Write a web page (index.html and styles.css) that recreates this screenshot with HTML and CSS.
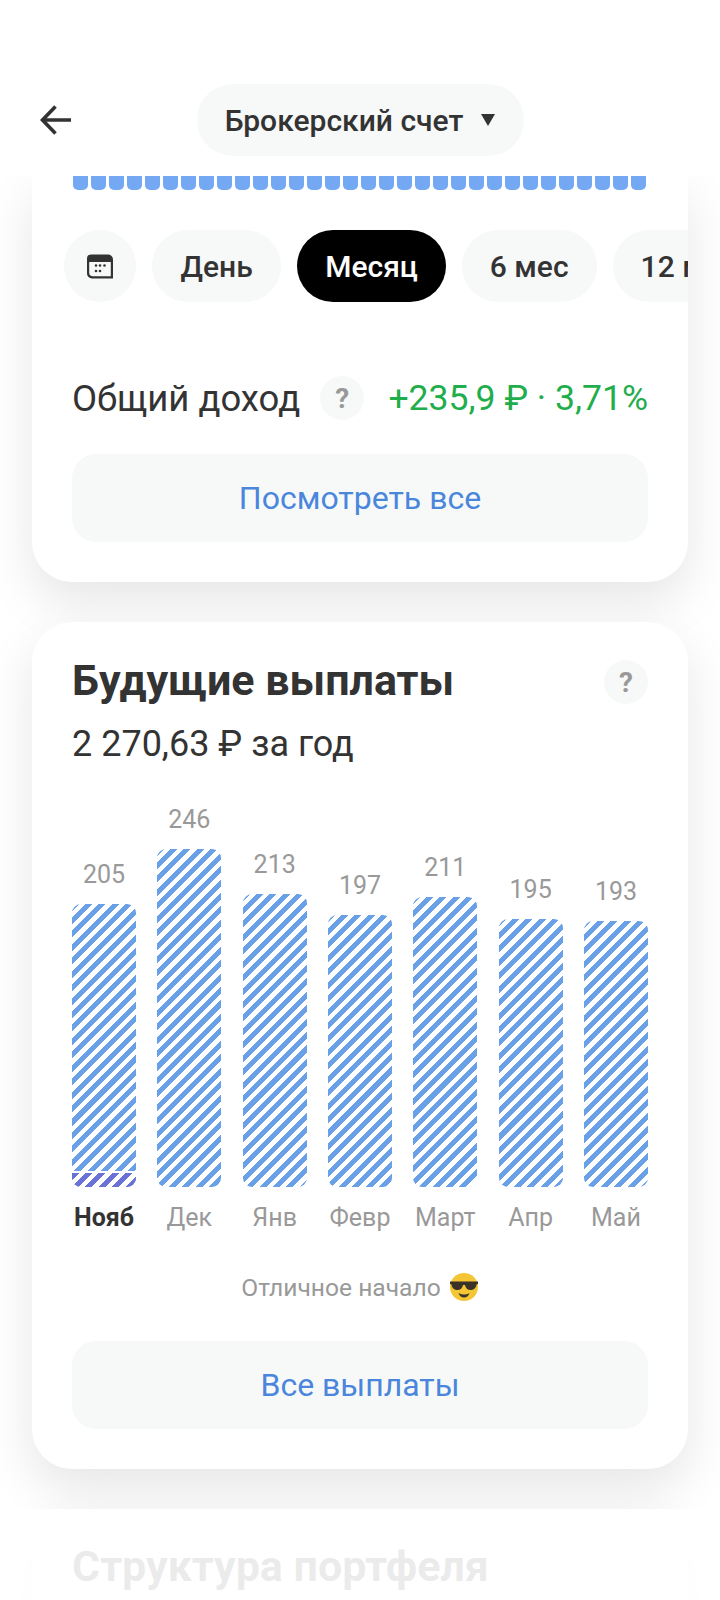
FILE: index.html
```html
<!DOCTYPE html>
<html lang="ru">
<head>
  <meta charset="UTF-8">
  <title>Брокерский счет</title>
  <link rel="stylesheet" href="styles.css">
</head>
<body>

<header class="topbar">
  <svg class="back" width="32" height="30" viewBox="0 0 32 30">
    <path d="M31 15H3M15.5 1.5L2.5 15l13 13.5" fill="none" stroke="#333" stroke-width="3.6"/>
  </svg>
  <div class="account">
    <span>Брокерский счет</span>
    <i class="caret"></i>
  </div>
</header>

<main class="content">

  <section class="card card-first">
    <div class="ticks">
      <i></i><i></i><i></i><i></i><i></i><i></i><i></i><i></i>
      <i></i><i></i><i></i><i></i><i></i><i></i><i></i><i></i>
      <i></i><i></i><i></i><i></i><i></i><i></i><i></i><i></i>
      <i></i><i></i><i></i><i></i><i></i><i></i><i></i><i></i>
    </div>
    <div class="periods">
      <div class="chip chip-icon">
        <svg width="26" height="26" viewBox="0 0 26 26">
          <path d="M4 1.500h17a5 5 0 0 1 5 5v19H5a5 5 0 0 1-5-5v-15a4 4 0 0 1 4-4z" fill="#333"/>
          <path d="M2.200 9h21.600v14.300H6a3.800 3.800 0 0 1-3.800-3.800z" fill="#f7f8f8"/>
          <g fill="#333">
            <circle cx="9" cy="12.500" r="1.300"/><circle cx="13" cy="12.500" r="1.300"/><circle cx="17.500" cy="12.500" r="1.300"/>
            <circle cx="9" cy="18" r="1.300"/><circle cx="13" cy="18" r="1.300"/>
          </g>
        </svg>
      </div>
      <div class="chip chip-day">День</div>
      <div class="chip chip-active">Месяц</div>
      <div class="chip">6 мес</div>
      <div class="chip">12 мес</div>
    </div>
    <div class="income">
      <span class="income-label">Общий доход</span>
      <span class="help">?</span>
      <span class="income-value">+235,9 ₽ · 3,71%</span>
    </div>
    <button class="wide-btn">Посмотреть все</button>
  </section>

  <section class="card card-payments">
    <div class="card-head">
      <h2>Будущие выплаты</h2>
      <span class="help">?</span>
    </div>
    <p class="sum">2 270,63 ₽ за год</p>

    <div class="chart">
      <div class="col"><span class="val">205</span><div class="bar" style="height:283px"><div class="bar-now"></div></div><span class="month month-now">Нояб</span></div>
      <div class="col"><span class="val">246</span><div class="bar" style="height:338px"></div><span class="month">Дек</span></div>
      <div class="col"><span class="val">213</span><div class="bar" style="height:293px"></div><span class="month">Янв</span></div>
      <div class="col"><span class="val">197</span><div class="bar" style="height:272px"></div><span class="month">Февр</span></div>
      <div class="col"><span class="val">211</span><div class="bar" style="height:290px"></div><span class="month">Март</span></div>
      <div class="col"><span class="val">195</span><div class="bar" style="height:268px"></div><span class="month">Апр</span></div>
      <div class="col"><span class="val">193</span><div class="bar" style="height:266px"></div><span class="month">Май</span></div>
    </div>

    <p class="note">
      Отличное начало
      <svg width="30" height="30" viewBox="0 0 30 30">
        <circle cx="15" cy="15" r="14" fill="#f4c534"/>
        <path d="M1 9.500h28v2.500l-1.500.5c-.5 4-3 5.500-6 5.500s-5-2-5.500-5h-2c-.5 3-2.500 5-5.500 5s-5.500-1.500-6-5.500L1 12z" fill="#3a3226"/>
        <path d="M9.500 21c3.500 2 7.500 2 11 0-1 3-3 4.500-5.500 4.500S10.500 24 9.500 21z" fill="#3a3226"/>
      </svg>
    </p>

    <button class="wide-btn">Все выплаты</button>
  </section>

  <section class="card card-next">
    <h2>Структура портфеля</h2>
  </section>

  <div class="fade"></div>
</main>

</body>
</html>
```

FILE: styles.css
```css
* {
  box-sizing: border-box;
}

body {
  margin: 0;
  height: 1600px;
  overflow: hidden;
  background: #fff;
  font-family: Roboto, "Noto Sans", sans-serif;
  color: #333;
}

.topbar {
  height: 176px;
  padding-top: 84px;
  position: relative;
  display: flex;
  justify-content: center;
  align-items: flex-start;
  background: #fff;
}

.back {
  position: absolute;
  left: 40px;
  top: 105px;
}

.account {
  height: 72px;
  width: 327px;
  border-radius: 36px;
  background: #f7f8f8;
  display: flex;
  align-items: center;
  justify-content: center;
  gap: 18px;
  font-size: 30px;
  font-weight: 500;
}

.caret {
  width: 0;
  height: 0;
  border-left: 7px solid transparent;
  border-right: 7px solid transparent;
  border-top: 12px solid #333;
}

.content {
  height: 1424px;
  overflow: hidden;
  position: relative;
  padding: 0 32px;
}

.card {
  background: #fff;
  border-radius: 40px;
  padding: 34px 40px 40px;
  margin-bottom: 40px;
  box-shadow: 0 20px 50px rgba(0,0,0,0.1);
}

.card-first {
  border-radius: 0 0 40px 40px;
  padding-top: 0;
}

.ticks {
  display: flex;
  gap: 3px;
  margin-left: 1px;
}

.ticks i {
  width: 15px;
  height: 14px;
  background: #75a8f2;
  border-radius: 0 0 5px 5px;
}

.periods {
  display: flex;
  gap: 16px;
  margin: 40px -40px 0 -8px;
  overflow: hidden;
}

.chip {
  flex: none;
  height: 72px;
  padding: 0 28px;
  border-radius: 36px;
  background: #f7f8f8;
  display: flex;
  align-items: center;
  font-size: 30px;
  font-weight: 500;
}

.chip-icon {
  width: 72px;
  padding: 0;
  justify-content: center;
}

.chip-day {
  padding: 0 28.5px;
}

.chip-active {
  background: #000;
  color: #fff;
}

.income {
  display: flex;
  align-items: center;
  margin-top: 74px;
}

.income-label {
  font-size: 36.5px;
}

.income-value {
  margin-left: auto;
  font-size: 35.6px;
  color: #1fae4b;
}

.income .help {
  margin-left: 20px;
}

.help {
  flex: none;
  width: 44px;
  height: 44px;
  border-radius: 50%;
  background: #f7f8f8;
  color: #999;
  font-size: 28px;
  font-weight: 700;
  display: flex;
  align-items: center;
  justify-content: center;
}

.wide-btn {
  display: block;
  width: 100%;
  height: 88px;
  margin-top: 34px;
  border: none;
  border-radius: 24px;
  background: #f7f9f9;
  color: #4a86dc;
  font-family: inherit;
  font-size: 32px;
}

.card-head {
  display: flex;
  align-items: center;
  justify-content: space-between;
}

h2 {
  margin: 0 0 4px;
  font-size: 43px;
  line-height: 48px;
  font-weight: 700;
}

.sum {
  margin: 14px 0 0;
  font-size: 36px;
  line-height: 44px;
}

.chart {
  display: flex;
  justify-content: space-between;
  align-items: flex-end;
  margin-top: 39px;
}

.col {
  width: 64px;
  display: flex;
  flex-direction: column;
  align-items: center;
}

.val {
  font-size: 25px;
  line-height: 30px;
  color: #999;
  margin-bottom: 14px;
}

.bar {
  width: 64px;
  border-radius: 9px;
  overflow: hidden;
  position: relative;
  background: repeating-linear-gradient(135deg, #6aa1e6 0, #6aa1e6 5px, #fff 5px, #fff 9.5px);
}

.bar-now {
  position: absolute;
  left: 0;
  right: 0;
  bottom: 0;
  height: 14px;
  background: repeating-linear-gradient(135deg, #6a72d6 0, #6a72d6 5px, #fff 5px, #fff 9.5px);
  box-shadow: 0 -2px 0 #fff;
}

.month {
  font-size: 25px;
  line-height: 30px;
  color: #999;
  margin-top: 16px;
  white-space: nowrap;
}

.month-now {
  font-weight: 700;
  color: #333;
}

.note {
  margin: 39px 0 0;
  height: 30px;
  display: flex;
  align-items: center;
  justify-content: center;
  gap: 8px;
  font-size: 24.6px;
  color: #999;
}

.card-payments .wide-btn {
  margin-top: 39px;
}

.card-next {
  height: 200px;
  padding-top: 33px;
}

.fade {
  position: absolute;
  left: 0;
  right: 0;
  top: 1333px;
  height: 91px;
  background: rgba(255,255,255,0.9);
}
```
